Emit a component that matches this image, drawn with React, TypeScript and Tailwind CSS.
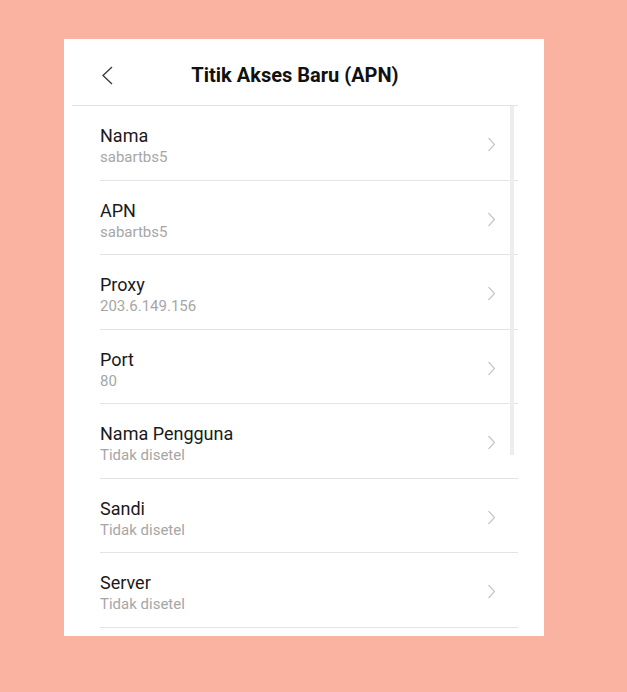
type ApnField = {
  label: string;
  value: string;
};

const fields: ApnField[] = [
  { label: "Nama", value: "sabartbs5" },
  { label: "APN", value: "sabartbs5" },
  { label: "Proxy", value: "203.6.149.156" },
  { label: "Port", value: "80" },
  { label: "Nama Pengguna", value: "Tidak disetel" },
  { label: "Sandi", value: "Tidak disetel" },
  { label: "Server", value: "Tidak disetel" },
];

function RowChevron() {
  return (
    <svg width="9" height="15" viewBox="0 0 9 15" fill="none" aria-hidden="true">
      <path d="M1.5 1 L7.5 7.5 L1.5 14" stroke="#c6c6c6" strokeWidth="1.2" />
    </svg>
  );
}

function BackChevron() {
  return (
    <svg width="13" height="19" viewBox="0 0 13 19" fill="none" aria-hidden="true">
      <path d="M11 1 L2 9.5 L11 18" stroke="#404040" strokeWidth="1.4" />
    </svg>
  );
}

export default function App() {
  return (
    <div
      className="h-[692px] w-full bg-[#f9b3a0] pt-[39px] pl-[64px]"
      style={{ fontFamily: "Roboto, 'Noto Sans', sans-serif" }}
    >
      <div className="relative h-[597px] w-[480px] overflow-hidden bg-white pl-[8px] pr-[26px]">
        <header className="relative flex h-[67px] items-center justify-center border-b border-[#e3e3e3] pt-[5px]">
          <span className="absolute left-[29px] top-[27px]">
            <BackChevron />
          </span>
          <h1 className="text-[20px] font-bold text-[#111]">Titik Akses Baru (APN)</h1>
        </header>

        <div className="pl-[28px]">
          {fields.map((field) => (
            <div
              className="flex h-[74.5px] items-start justify-between border-b border-[#e3e3e3] pr-[22px]"
              key={field.label}
            >
              <div className="pt-[19px]">
                <p className="text-[18px] leading-[21px] text-[#1a1a1a]">{field.label}</p>
                <p className="mt-[2px] text-[15px] leading-[18px] text-[#a6a6a6]">
                  {field.value}
                </p>
              </div>
              <div className="pt-[31px]">
                <RowChevron />
              </div>
            </div>
          ))}
        </div>

        <div className="absolute right-[30px] top-[67px] h-[349px] w-[4px] bg-[#ededed]" />
      </div>
    </div>
  );
}
